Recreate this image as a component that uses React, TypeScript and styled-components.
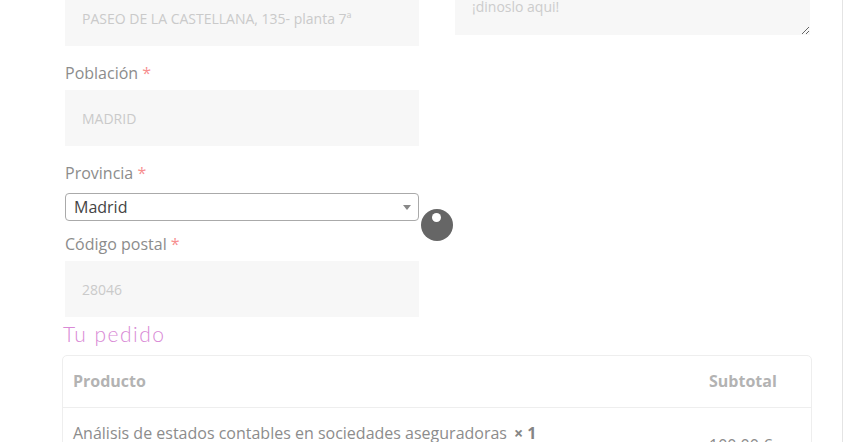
import * as React from "react";
import styled, { createGlobalStyle } from "styled-components";

const GlobalStyle = createGlobalStyle`
  html, body {
    margin: 0;
    padding: 0;
    background: #fff;
    overflow: hidden;
  }
  body {
    font-family: "Open Sans", "Liberation Sans", sans-serif;
  }
`;

const Page = styled.div`
  box-sizing: border-box;
  width: 843px;
  height: 442px;
  padding-left: 62px;
  border-right: 1px solid #e4e4e4;
  overflow: hidden;
`;

const Inner = styled.div`
  margin-top: -10px;
`;

const Columns = styled.div`
  display: grid;
  grid-template-columns: 354px 355px;
  column-gap: 36px;
  align-items: start;
  padding-left: 3px;
`;

const Column = styled.div`
  display: flex;
  flex-direction: column;
`;

const Field = styled.div`
  display: flex;
  flex-direction: column;
  margin-top: 15px;
`;

const Label = styled.label`
  font-size: 16px;
  line-height: 24px;
  color: #8c8c8c;
  margin-bottom: 5px;
`;

const Required = styled.span`
  color: #f78f8f;
`;

const TextInput = styled.input`
  box-sizing: border-box;
  width: 100%;
  height: 56px;
  margin: 0;
  padding: 0 17px;
  border: none;
  outline: none;
  background: #f7f7f7;
  font-family: inherit;
  font-size: 14px;
  color: #cacaca;
`;

const Notes = styled.textarea`
  box-sizing: border-box;
  display: block;
  width: 100%;
  height: 55px;
  margin: -10px 0 0;
  padding: 17px;
  border: none;
  outline: none;
  background: #f7f7f7;
  font-family: inherit;
  font-size: 14px;
  line-height: 20px;
  resize: vertical;

  &::placeholder {
    color: #cccccc;
  }
`;

const SelectWrap = styled.div`
  position: relative;
  margin-top: 3px;
  margin-bottom: -4px;
`;

const SelectBox = styled.div`
  box-sizing: border-box;
  height: 28px;
  display: flex;
  align-items: center;
  padding: 0 8px;
  border: 1px solid #aaa;
  border-radius: 4px;
  background: #fff;
  font-size: 16px;
  color: #444;
`;

const Arrow = styled.span`
  position: absolute;
  right: 8px;
  top: 12px;
  width: 0;
  height: 0;
  border-style: solid;
  border-width: 5px 4px 0 4px;
  border-color: #888 transparent transparent transparent;
`;

const Loader = styled.div`
  position: absolute;
  left: calc(100% + 2px);
  top: 16px;
  width: 32px;
  height: 32px;
  border-radius: 50%;
  background: #666;

  &::after {
    content: "";
    position: absolute;
    left: 11px;
    top: 4px;
    width: 9px;
    height: 9px;
    border-radius: 50%;
    background: #fff;
  }
`;

const Title = styled.h3`
  margin: 3px 0 7px 1px;
  font-family: "Lato", "Open Sans", sans-serif;
  font-weight: 300;
  font-size: 21px;
  line-height: 28px;
  letter-spacing: 1.5px;
  color: #d98ad6;
`;

const OrderTable = styled.div`
  width: 750px;
  box-sizing: border-box;
  border: 1px solid #eee;
  border-radius: 5px;
`;

const Row = styled.div<{ $head?: boolean }>`
  display: grid;
  grid-template-columns: 1fr 112px;
  min-height: ${p => (p.$head ? 0 : 74)}px;
  border-bottom: ${p => (p.$head ? "1px solid #eee" : "none")};
`;

const Cell = styled.div<{ $head?: boolean; $middle?: boolean }>`
  padding: ${p => (p.$head ? "13px 10px 14px" : "13px 10px")};
  align-self: ${p => (p.$middle ? "center" : "start")};
  font-size: 16px;
  line-height: 24px;
  font-weight: ${p => (p.$head ? 700 : 400)};
  color: ${p => (p.$head ? "#b3b3b3" : "#8c8c8c")};
`;

const Qty = styled.strong`
  font-weight: 700;
  margin-left: 7px;
  color: #858585;
`;

export default function App() {
  return (
    <Page>
      <GlobalStyle />
      <Inner>
        <Columns>
          <Column>
            <TextInput readOnly defaultValue="PASEO DE LA CASTELLANA, 135- planta 7ª" />

            <Field>
              <Label>
                Población <Required>*</Required>
              </Label>
              <TextInput readOnly defaultValue="MADRID" />
            </Field>

            <Field>
              <Label>
                Provincia <Required>*</Required>
              </Label>
              <SelectWrap>
                <SelectBox>Madrid</SelectBox>
                <Arrow />
                <Loader />
              </SelectWrap>
            </Field>

            <Field>
              <Label>
                Código postal <Required>*</Required>
              </Label>
              <TextInput readOnly defaultValue="28046" />
            </Field>
          </Column>

          <Column>
            <Notes placeholder="¡dinoslo aqui!" />
          </Column>
        </Columns>

        <Title>Tu pedido</Title>

        <OrderTable>
          <Row $head>
            <Cell $head>Producto</Cell>
            <Cell $head>Subtotal</Cell>
          </Row>
          <Row>
            <Cell>
              Análisis de estados contables en sociedades aseguradoras
              <Qty>× 1</Qty>
            </Cell>
            <Cell $middle>100,00 €</Cell>
          </Row>
        </OrderTable>
      </Inner>
    </Page>
  );
}
